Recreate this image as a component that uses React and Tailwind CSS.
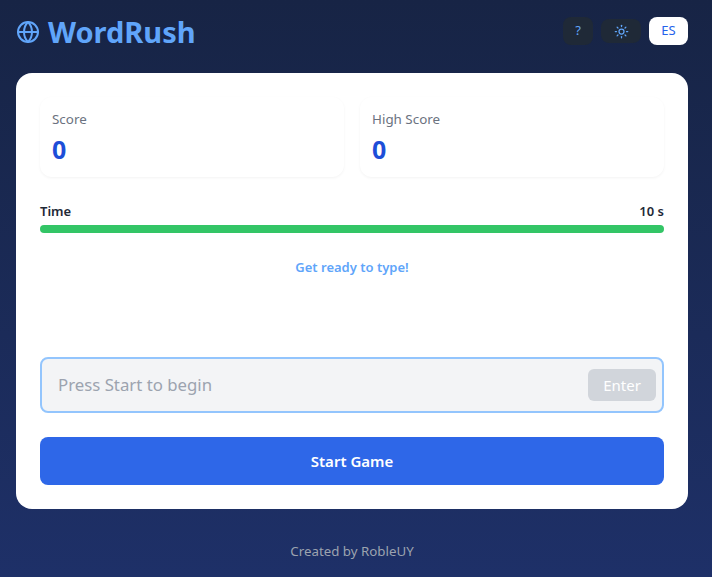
import { Globe, Sun } from 'lucide-react'

function StatCard({ label, value }) {
  return (
    <div className="flex-1 h-20 rounded-xl bg-white px-3 pt-3 shadow-[0_1px_3px_rgba(0,0,0,0.05)]">
      <div className="text-[13.4px] leading-5 text-[#6b7280]">{label}</div>
      <div className="mt-[4px] text-[25px] leading-8 font-bold text-[#1d4ed8]">{value}</div>
    </div>
  )
}

export default function App() {
  return (
    <div className="min-h-[577px] bg-gradient-to-b from-[#172445] to-[#1e3068] font-['Noto_Sans',sans-serif]">
      <div className="pl-4 pr-6 pt-4">
        <header className="flex items-start justify-between h-[57px]">
          <div className="-mt-[1px] flex items-center gap-2 text-[#60a5fa]">
            <Globe size={24} strokeWidth={2} className="-mt-[1px]" />
            <h1 className="text-[29px] leading-[34px] font-bold">WordRush</h1>
          </div>
          <div className="flex items-start gap-2 pt-px">
            <button className="w-[30px] h-7 rounded-lg bg-[#1f2937] text-[13px] text-[#60a5fa]">?</button>
            <button className="mt-[2px] flex items-center justify-center w-10 h-6 rounded-lg bg-[#1f2937] text-[#60a5fa]">
              <Sun size={15} />
            </button>
            <button className="w-[39px] h-7 rounded-lg bg-white text-[13px] text-[#2563eb]">ES</button>
          </div>
        </header>

        <main className="rounded-2xl bg-white p-6 h-[436px]">
          <div className="flex gap-4">
            <StatCard label="Score" value="0" />
            <StatCard label="High Score" value="0" />
          </div>

          <div className="mt-[26px] flex justify-between text-[13px] leading-4 font-semibold text-[#1f2937]">
            <span>Time</span>
            <span>10 s</span>
          </div>
          <div className="mt-[6px] h-2 rounded-full bg-[#33c566]" />

          <p className="mt-[26px] text-center text-[13px] leading-4 font-semibold text-[#60a5fa]">Get ready to type!</p>

          <div className="mt-[82px] flex h-14 items-center justify-between rounded-lg border-2 border-[#93c5fd] bg-[#f3f4f6] pl-4 pr-1.5">
            <span className="text-[16.8px] text-[#9ca3af]">Press Start to begin</span>
            <button className="h-8 w-[68px] rounded-md bg-[#d1d5db] text-[15px] text-white">Enter</button>
          </div>

          <button className="mt-6 h-12 w-full rounded-lg bg-[#2e67e8] text-[15px] font-semibold text-white">Start Game</button>
        </main>

        <footer className="mt-[34px] text-center text-[13.3px] leading-4 text-[#9ca3af]">Created by RobleUY</footer>
      </div>
    </div>
  )
}
